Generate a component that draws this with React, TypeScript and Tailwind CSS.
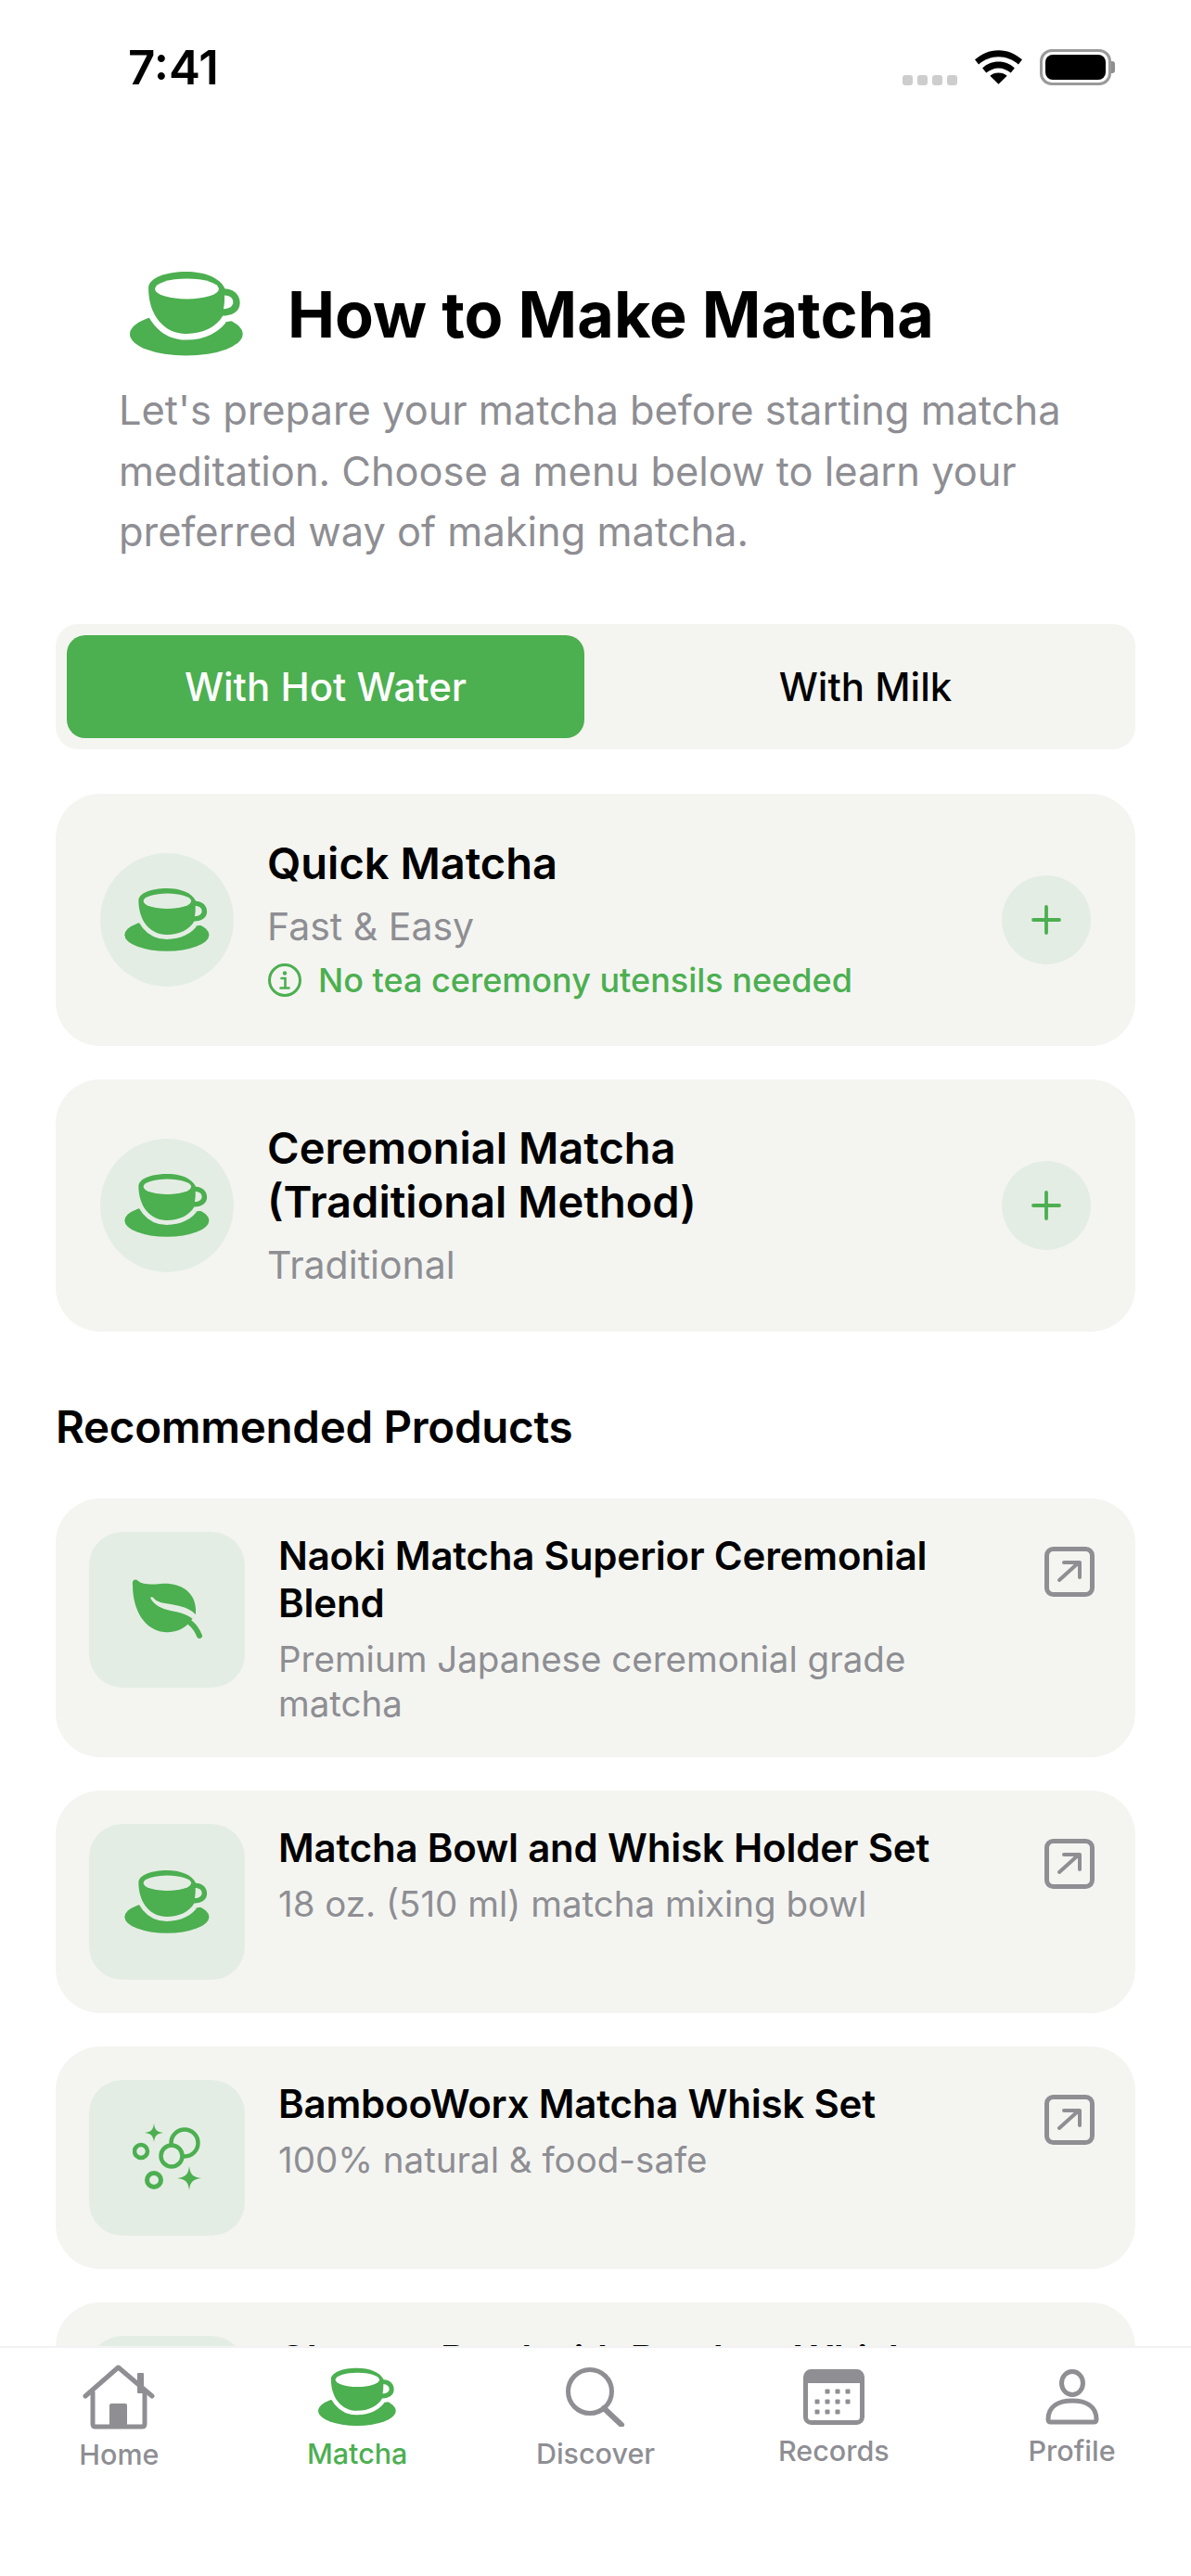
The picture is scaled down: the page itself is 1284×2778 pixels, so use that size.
import React from 'react';
import { Plus } from 'lucide-react';

const GREEN = '#4CAF50';
const CUP = 'M120 122C122 90 175 70 242 70C300 70 350 88 367 125C395 125 415 145 415 170C415 195 395 212 360 212C340 248 295 270 242 270C170 270 120 210 120 122Z';

// cup on saucer, used everywhere the matcha icon shows up
function CupIcon({ className, color = GREEN, bg }: { className?: string; color?: string; bg: string }) {
    return (
        <svg className={className} viewBox="60 70 365 272" fill="none">
            <ellipse cx="242" cy="271" rx="182" ry="70" fill={color} />
            <path d={CUP} stroke={bg} strokeWidth="40" />
            <path d={CUP} fill={color} />
            <ellipse cx="244" cy="125" rx="103" ry="33" fill={bg} />
            <path d="M365 146C382 146 393 155 393 168C393 182 380 190 362 190C365 175 366 160 365 146Z" fill={bg} />
        </svg>
    );
}

function InfoIcon({ className }: { className?: string }) {
    return (
        <svg className={className} viewBox="0 0 36 36" fill="none" stroke={GREEN}>
            <circle cx="18" cy="18" r="16.5" strokeWidth="3" />
            <circle cx="18" cy="10.5" r="2.2" fill={GREEN} stroke="none" />
            <path d="M14.5 16h4v10M13.5 26.5h9" strokeWidth="2.6" strokeLinecap="round" />
        </svg>
    );
}

function LeafIcon({ className }: { className?: string }) {
    return (
        <svg className={className} viewBox="0 0 76 65" fill="none">
            <path d="M1 6C0 1 4-1 7 2C12 6 20 6 31 5C50 3 68 12 69 32L69 37C68 41 64 44 62 47C55 55 45 58 35 57C15 55 1 35 1 6Z" fill={GREEN} />
            <path d="M63 47C68 51 71 56 73 61" stroke={GREEN} strokeWidth="6" strokeLinecap="round" />
            <path d="M20 20C22 18 24 20 25 22C30 26 38 26 47 28C57 30 66 33 70 40L69 46C62 38 52 36 42 34C32 32 23 27 20 20Z" fill="#E4EDE4" />
        </svg>
    );
}

function BubblesIcon({ className }: { className?: string }) {
    return (
        <svg className={className} viewBox="0 0 74 73" fill="none" stroke={GREEN} strokeWidth="4.5">
            <circle cx="56" cy="21" r="14.5" />
            <circle cx="42" cy="35" r="11.5" fill="#E4EDE4" />
            <circle cx="9" cy="30" r="7" />
            <circle cx="23" cy="61" r="7.5" strokeWidth="5" />
            <path d="M23 0c1 7 3 9 10 10-7 1-9 3-10 10-1-7-3-9-10-10 7-1 9-3 10-10Z" fill={GREEN} stroke="none" />
            <path d="M61 46c1 9 4 12 13 13-9 1-12 4-13 13-1-9-4-12-13-13 9-1 12-4 13-13Z" fill={GREEN} stroke="none" />
        </svg>
    );
}

function ExternalIcon() {
    return (
        <svg className="w-[54px] h-[54px] shrink-0" viewBox="0 0 54 54" fill="none" stroke="#8E8E93" strokeLinecap="round" strokeLinejoin="round">
            <rect x="2.5" y="2.5" width="49" height="49" rx="7" strokeWidth="5" />
            <path d="M16 36 37 17M21 17h17v16" strokeWidth="4" />
        </svg>
    );
}

function WifiIcon() {
    return (
        <svg className="w-[51px] h-[37px] mb-[1px]" viewBox="0 0 50 36" fill="#000">
            <path d="M25 0C15 0 7 4 0 10l4 5c6-5 13-8 21-8s15 3 21 8l4-5C43 4 35 0 25 0Z" />
            <path d="M25 12c-7 0-12 2-17 7l4 5c4-3 8-5 13-5s9 2 13 5l4-5c-5-5-10-7-17-7Z" />
            <path d="M25 24c-4 0-6 1-9 3l9 9 9-9c-3-2-5-3-9-3Z" />
        </svg>
    );
}

function StatusBar() {
    return (
        <div className="flex justify-between items-start h-[135px] shrink-0 pl-[138px] pr-[82px] pt-[43px]">
            <span className="text-[51px] leading-[60px] font-semibold text-black">7:41</span>
            <div className="flex items-end mt-[10px]">
                <div className="flex gap-[5px] mr-[19px]">
                    {[0, 1, 2, 3].map(i => <div key={i} className="w-[11px] h-[11px] rounded-[3px] bg-[#CDCDCD]" />)}
                </div>
                <WifiIcon />
                <div className="ml-[19px] w-[77px] h-[39px] rounded-[13px] border-[3px] border-[#9A9A9A] p-[3px]">
                    <div className="w-full h-full rounded-[8px] bg-black" />
                </div>
                <div className="w-[4px] h-[13px] mb-[13px] bg-[#8E8E8E] rounded-r-[3px]" />
            </div>
        </div>
    );
}

function Header() {
    return (
        <div className="pl-[128px] pr-[60px] pt-[158px]">
            <div className="flex items-center gap-[48px] pl-[12px]">
                <CupIcon className="w-[122px] h-[91px]" bg="#fff" />
                <h1 className="text-[68.3px] leading-[80px] font-bold text-black">How to Make Matcha</h1>
            </div>
            <p className="mt-[26px] text-[43.4px] leading-[65.5px] text-[#8E8E93]">
                Let's prepare your matcha before starting matcha meditation. Choose a menu below to learn your preferred way of making matcha.
            </p>
        </div>
    );
}

function Segmented() {
    return (
        <div className="mt-[66px] mx-[60px] h-[135px] rounded-[24px] bg-[#F4F5F1] p-[12px] flex">
            <div className="w-[558px] rounded-[20px] bg-[#4CAF50] text-white flex items-center justify-center text-[42px] font-medium">With Hot Water</div>
            <div className="flex-1 pl-[24px] flex items-center justify-center text-[42px] font-medium text-black">With Milk</div>
        </div>
    );
}

function MethodCard({ title, sub, note }: { title: React.ReactNode; sub: string; note?: string }) {
    return (
        <div className="h-[272px] rounded-[48px] bg-[#F4F5F1] pl-[48px] pr-[48px] flex items-center">
            <div className="w-[144px] h-[144px] rounded-full bg-[#E4EDE4] flex items-center justify-center shrink-0">
                <CupIcon className="w-[92px] h-[68px]" bg="#E4EDE4" />
            </div>
            <div className="ml-[36px] flex-1">
                <div className="text-[47px] leading-[58px] font-semibold text-black">{title}</div>
                <div className="mt-[12px] text-[41px] leading-[54px] text-[#8E8E93]">{sub}</div>
                {note && (
                    <div className="mt-[6px] flex items-center gap-[18px] text-[36px] leading-[50px] font-medium text-[#4CAF50]">
                        <InfoIcon className="w-[36px] h-[36px] ml-[1px]" />
                        {note}
                    </div>
                )}
            </div>
            <div className="w-[96px] h-[96px] rounded-full bg-[#E4EDE4] flex items-center justify-center shrink-0">
                <Plus className="w-[48px] h-[48px] text-[#4CAF50]" strokeWidth={1.9} />
            </div>
        </div>
    );
}

function ProductCard({ icon, title, sub, h }: { icon: React.ReactNode; title: string; sub: string; h: string }) {
    return (
        <div className={`${h} rounded-[48px] bg-[#F4F5F1] p-[36px] flex items-start`}>
            <div className="w-[168px] h-[168px] rounded-[36px] bg-[#E4EDE4] flex items-center justify-center shrink-0">{icon}</div>
            <div className="ml-[36px] flex-1 pr-[30px]">
                <div className="text-[42px] leading-[51px] font-semibold text-black tracking-[-0.2px]">{title}</div>
                <div className="mt-[11px] text-[38.5px] leading-[48px] text-[#8E8E93]">{sub}</div>
            </div>
            <div className="mt-[16px] mr-[8px]"><ExternalIcon /></div>
        </div>
    );
}

function TabBar() {
    const gray = '#8E8E93';
    const label = 'text-[30.5px] leading-[40px] font-medium';
    return (
        <div className="h-[248px] shrink-0 bg-white border-t-[2px] border-[#F2F2F4] flex items-start">
            <div className="flex-1 flex flex-col items-center pt-[18px]">
                <svg className="w-[78px] h-[70px]" viewBox="0 0 78 70" fill="none" stroke={gray} strokeWidth="5" strokeLinecap="round" strokeLinejoin="round">
                    <rect x="59" y="9" width="7" height="22" rx="1" fill={gray} stroke="none" />
                    <path d="M3 34 38.500 3 75 34" />
                    <path d="M11 30v34q0 3 3 3h50q3 0 3-3V30" />
                    <rect x="29" y="42" width="19" height="25" rx="2" fill={gray} stroke="none" />
                </svg>
                <span className={`${label} text-[#8E8E93] mt-[7px]`}>Home</span>
            </div>
            <div className="flex-1 flex flex-col items-center pt-[21px]">
                <CupIcon className="w-[84px] h-[64px]" bg="#fff" />
                <span className={`${label} text-[#4CAF50] mt-[9px]`}>Matcha</span>
            </div>
            <div className="flex-1 flex flex-col items-center pt-[21px]">
                <svg className="w-[64px] h-[64px]" viewBox="0 0 64 64" fill="none" stroke={gray} strokeLinecap="round">
                    <circle cx="26" cy="26" r="23.500" strokeWidth="5" />
                    <path d="M41 44 60 62" strokeWidth="6" />
                </svg>
                <span className={`${label} text-[#8E8E93] mt-[9px]`}>Discover</span>
            </div>
            <div className="flex-1 flex flex-col items-center pt-[23px]">
                <svg className="w-[66px] h-[60px]" viewBox="0 0 66 60" fill="none">
                    <rect x="2.500" y="2.500" width="61" height="55" rx="6" stroke={gray} strokeWidth="5" />
                    <path d="M2 8q0-6 6-6h50q6 0 6 6v7H2Z" fill={gray} />
                    {[[26, 24], [37, 24], [48, 24], [15, 35], [26, 35], [37, 35], [48, 35], [15, 46], [26, 46], [37, 46]].map(([x, y]) => (
                        <rect key={`${x}-${y}`} x={x - 2.5} y={y - 2.5} width="5" height="5" rx="1" fill={gray} />
                    ))}
                </svg>
                <span className={`${label} text-[#8E8E93] mt-[8px]`}>Records</span>
            </div>
            <div className="flex-1 flex flex-col items-center pt-[23px]">
                <svg className="w-[58px] h-[60px]" viewBox="0 0 58 60" fill="none" stroke={gray} strokeWidth="5" strokeLinejoin="round">
                    <ellipse cx="29" cy="15" rx="11.500" ry="12.500" />
                    <path d="M3 54c0-14 11-20 26-20s26 6 26 20q0 3-3 3H6q-3 0-3-3Z" />
                </svg>
                <span className={`${label} text-[#8E8E93] mt-[8px]`}>Profile</span>
            </div>
        </div>
    );
}

export default function App() {
    return (
        <div className="w-[1284px] h-[2778px] bg-white flex flex-col overflow-hidden font-['Inter',sans-serif]">
            <div className="flex-1 min-h-0 overflow-hidden">
                <StatusBar />
                <Header />
                <Segmented />
                <div className="mt-[48px] mx-[60px] flex flex-col gap-[36px]">
                    <MethodCard title="Quick Matcha" sub="Fast & Easy" note="No tea ceremony utensils needed" />
                    <MethodCard title={<>Ceremonial Matcha<br />(Traditional Method)</>} sub="Traditional" />
                </div>
                <h2 className="mt-[72px] mx-[60px] text-[47.5px] leading-[62px] font-semibold text-black tracking-[-0.3px]">Recommended Products</h2>
                <div className="mt-[46px] mx-[60px] flex flex-col gap-[36px]">
                    <ProductCard h="h-[279px]" icon={<LeafIcon className="w-[76px] h-[65px]" />} title="Naoki Matcha Superior Ceremonial Blend" sub="Premium Japanese ceremonial grade matcha" />
                    <ProductCard h="h-[240px]" icon={<CupIcon className="w-[92px] h-[68px]" bg="#E4EDE4" />} title="Matcha Bowl and Whisk Holder Set" sub="18 oz. (510 ml) matcha mixing bowl" />
                    <ProductCard h="h-[240px]" icon={<BubblesIcon className="w-[74px] h-[73px]" />} title="BambooWorx Matcha Whisk Set" sub="100% natural & food-safe" />
                    <ProductCard h="h-[240px]" icon={<CupIcon className="w-[92px] h-[68px]" bg="#E4EDE4" />} title="Chawan Bowl with Bamboo Whisk" sub="Keeps your whisk in shape" />
                </div>
            </div>
            <TabBar />
        </div>
    );
}
